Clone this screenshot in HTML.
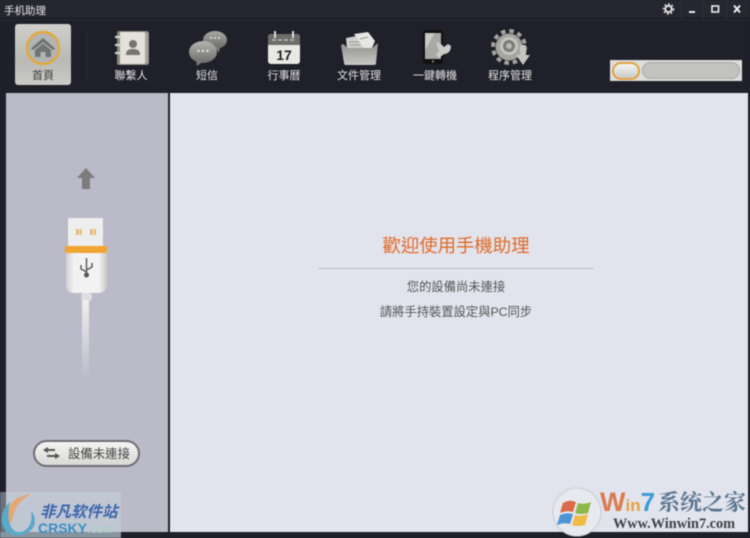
<!DOCTYPE html>
<html><head><meta charset="utf-8"><style>
html,body{margin:0;padding:0;background:#1f2029}
#r{position:relative;width:750px;height:538px;overflow:hidden;background:#1f2029;font-family:"Liberation Sans","Noto Sans CJK TC",sans-serif;filter:blur(.4px)}
#r div{position:absolute}
.t{color:#e4e4e4;font-size:11px;line-height:14px;text-align:center;white-space:nowrap;top:69px}
svg{position:absolute;overflow:visible}
</style></head><body><div id="r">
<div style="left:0;top:0;width:750px;height:18px;background:#25262f"></div>
<div style="left:0;top:18px;width:750px;height:1px;background:#14151a"></div>
<div style="left:0;top:19px;width:750px;height:1px;background:#2e2f39"></div>
<div style="left:4px;top:4px;color:#e8e8e8;font-size:10.5px;line-height:14px">手机助理</div>
<svg width="750" height="20" style="left:0;top:0" fill="none">
<circle cx="668.500" cy="9" r="3.200" stroke="#eee" stroke-width="1.800"/><circle cx="668.500" cy="9" r="5" stroke="#eee" stroke-width="1.400" stroke-dasharray="1.800 2"/>
<rect x="689" y="11" width="6" height="2" fill="#eee"/>
<rect x="712" y="6" width="6.500" height="6" stroke="#eee" stroke-width="1.600"/>
<path d="M734 5.500l6 7m0-7l-6 7" stroke="#eee" stroke-width="2"/>
<path d="M681.500 0v20M703.500 0v20M726.500 0v20" stroke="#2e2f38"/>
</svg>
<svg width="0" height="0"><defs>
<linearGradient id="g1" x1="0" y1="0" x2="0" y2="1"><stop offset="0" stop-color="#b4b4b0"/><stop offset="1" stop-color="#6e6e6a"/></linearGradient>
<linearGradient id="g2" x1="0" y1="0" x2="0" y2="1"><stop offset="0" stop-color="#a8a8a4"/><stop offset="1" stop-color="#696965"/></linearGradient>
<linearGradient id="g3" x1="0" y1="0" x2="0" y2="1"><stop offset="0" stop-color="#8f8f8b"/><stop offset="1" stop-color="#c8c8c4"/></linearGradient>
<linearGradient id="c" x1="0" y1="0" x2="0" y2="1"><stop offset="0" stop-color="#f0f0f0"/><stop offset="1" stop-color="#e8e8ea" stop-opacity="0"/></linearGradient>
<linearGradient id="b" x1="0" y1="0" x2="1" y2="0"><stop offset="0" stop-color="#d0d0d0"/><stop offset=".2" stop-color="#f2f2f2"/><stop offset=".8" stop-color="#f2f2f2"/><stop offset="1" stop-color="#c8c8c8"/></linearGradient>
</defs></svg>
<div style="left:15px;top:24px;width:56px;height:61px;border-radius:3px;background:linear-gradient(#cfcfcc,#b9b9b6 60%,#cbcbc8)"></div>
<svg width="40" height="40" style="left:23px;top:29px" viewBox="0 0 40 40">
<circle cx="20" cy="19" r="16" fill="#b4b4b2" stroke="#e3a93a" stroke-width="2.400"/>
<path d="M20 9L8 19.500l2 1.500 10-8 10 8 2-1.500z" fill="#6c7270"/><path d="M12 21l8-6.500 8 6.500v7h-5.500v-5h-5v5H12z" fill="#707674"/>
</svg>
<div class="t" style="left:15px;width:56px;color:#3a3a3a">首頁</div>
<div style="left:86px;top:32px;width:1px;height:48px;background:#2c2d36"></div>
<svg width="36" height="36" style="left:115px;top:30px" viewBox="0 0 36 36">
<rect x="2" y="1" width="32" height="34" rx="2" fill="#8a8880"/><rect x="5" y="2" width="25" height="32" fill="#e3e1da"/><rect x="30" y="3" width="3" height="30" fill="#aaa89f"/>
<path d="M0 7h7M0 15h7M0 23h7" stroke="#d5d5d2" stroke-width="2.200"/>
<circle cx="18" cy="14" r="4" fill="#76746e"/><path d="M11 25c0-5 3-6 7-6s7 1 7 6z" fill="#76746e"/>
</svg>
<div class="t" style="left:107px;width:48px">聯繫人</div>
<svg width="40" height="36" style="left:189px;top:30px" viewBox="0 0 40 36">
<ellipse cx="26" cy="10" rx="12" ry="9" fill="url(#g2)"/><path d="M26 17l4 6 1-7z" fill="#777"/>
<ellipse cx="14" cy="22" rx="14" ry="11" fill="url(#g1)"/><path d="M7 30l1 6 7-5z" fill="#777773"/>
<g fill="#e4e4e0"><circle cx="22" cy="8" r="1"/><circle cx="26" cy="8" r="1"/><circle cx="30" cy="8" r="1"/><circle cx="9.500" cy="21" r="1.200"/><circle cx="14" cy="21" r="1.200"/><circle cx="18.500" cy="21" r="1.200"/></g>
</svg>
<div class="t" style="left:183px;width:48px">短信</div>
<svg width="36" height="36" style="left:266px;top:30px" viewBox="0 0 36 36">
<rect x="2" y="4" width="32" height="30" rx="3" fill="#e8e8e5"/><path d="M2 15V7a3 3 0 0 1 3-3h26a3 3 0 0 1 3 3v8z" fill="#6c6c69"/>
<path d="M9 1v7M27 1v7" stroke="#ddd" stroke-width="2"/>
<path d="M6 10h24" stroke="#aaa" stroke-width="2" stroke-dasharray="4 2"/>
<text x="18" y="30" font-size="14" font-weight="bold" text-anchor="middle" fill="#222" font-family="Liberation Sans">17</text>
</svg>
<div class="t" style="left:260px;width:48px">行事曆</div>
<svg width="40" height="36" style="left:340px;top:30px" viewBox="0 0 40 36">
<path d="M6 8l16-3 6 4-2 20H8z" fill="#cfcfcc"/><path d="M14 4l14-2 7 9-6 14z" fill="#e6e6e3"/><path d="M9 12h10M10 15h10M20 9l8-2" stroke="#999"/>
<path d="M1 15l2-1 5 4h24l6-5-2 20q0 2-2 2H6q-2 0-2-2z" fill="url(#g3)"/>
</svg>
<div class="t" style="left:335px;width:48px">文件管理</div>
<svg width="32" height="36" style="left:422px;top:30px" viewBox="0 0 32 36">
<rect x="1" y="0" width="20" height="34" rx="3" fill="#111"/><rect x="3" y="3" width="16" height="26" fill="#a8a8a5"/><path d="M3 3h10L3 20z" fill="#c8c8c5"/>
<circle cx="11" cy="31.500" r="1.200" fill="#777"/>
<path d="M14 12l5 2 3 3 4-3 3 2c0 5-3 8-7 8l-5 4-3-3 3-4z" fill="#cbcbc7"/>
</svg>
<div class="t" style="left:411px;width:48px">一鍵轉機</div>
<svg width="38" height="36" style="left:492px;top:30px" viewBox="0 0 38 36">
<circle cx="17" cy="17" r="13.500" fill="#a4a4a0"/><circle cx="17" cy="17" r="16" fill="none" stroke="#a4a4a0" stroke-width="4" stroke-dasharray="4.500 3.900"/>
<circle cx="17" cy="16" r="9" fill="#c4c4c0"/><circle cx="17" cy="16" r="6" fill="#7a7a77"/><circle cx="17" cy="16" r="3" fill="#bbb"/>
<path d="M28 15h6v10h4l-7 10-7-10h4z" fill="#c4c4c0"/>
</svg>
<div class="t" style="left:486px;width:48px">程序管理</div>
<div style="left:610px;top:60px;width:132px;height:21px;background:#dddddd"></div>
<div style="left:642px;top:62px;width:98px;height:17px;border-radius:9px;background:#c2c2c0;border:1px solid #a8a8a6;box-sizing:border-box"></div>
<div style="left:612px;top:62px;width:28px;height:18px;border-radius:9px;box-sizing:border-box;border:2px solid #e0a33e;background:linear-gradient(#f5f5f3,#c9c9c6)"></div>

<div style="left:6px;top:93px;width:162px;height:439px;background:#babac8"></div>
<div style="left:170px;top:93px;width:578px;height:439px;background:#e1e4ec"></div>

<svg width="140" height="240" style="left:20px;top:150px" viewBox="0 0 140 240">
<path d="M66 18l9 10h-5v11h-8V28h-5z" fill="#7c7c7c"/>
<rect x="48" y="68" width="35" height="28" fill="#eeeeee"/>
<g fill="#e4b878"><rect x="56" y="79" width="3" height="6"/><rect x="60" y="79" width="2" height="6"/><rect x="70" y="79" width="3" height="6"/><rect x="74" y="79" width="2" height="6"/></g>
<path d="M46 102v33q0 8 8 8h24q8 0 9-8v-33z" fill="url(#b)"/>
<rect x="45" y="96" width="42" height="7" fill="#f0a431"/>
<path d="M66.500 108v18M61 115v4l5.500 3M72 113v4l-5.500 3" stroke="#555" stroke-width="1.400" fill="none"/><circle cx="66.500" cy="125" r="2.500" fill="#555"/>
<rect x="61" y="143" width="11" height="8" rx="3" fill="#dedede"/>
<rect x="62" y="150" width="7" height="82" fill="url(#c)"/>
</svg>

<div style="left:33px;top:440px;width:107px;height:27px;box-sizing:border-box;border-radius:14px;border:2px solid #6e6e72;background:linear-gradient(#f4f4f2,#d8d8d6)"></div>
<svg width="20" height="14" style="left:42px;top:446px" viewBox="0 0 20 14"><path d="M6 1L1 4l5 3V5h7V3H6zM13 7l5 3-5 3v-2H5V9h8z" fill="#555"/></svg>
<div style="left:68px;top:447px;color:#444;font-size:12.400px;line-height:15px;white-space:nowrap">設備未連接</div>

<div style="left:318px;top:234px;width:276px;text-align:center;color:#e26a28;font-size:18.400px;line-height:24px;white-space:nowrap">歡迎使用手機助理</div>
<div style="left:318px;top:268px;width:276px;height:1px;background:#b9bcc4"></div>
<div style="left:318px;top:279px;width:276px;text-align:center;color:#555;font-size:12.300px;line-height:16px">您的設備尚未連接</div>
<div style="left:318px;top:304px;width:276px;text-align:center;color:#555;font-size:12.300px;line-height:16px;white-space:nowrap">請將手持裝置設定與PC同步</div>

<div style="left:0;top:492px;width:121px;height:46px;background:rgba(200,215,225,.45)"></div>
<div style="left:0;top:532px;width:121px;height:6px;background:rgba(170,190,205,.45)"></div>
<svg width="40" height="46" style="left:0;top:492px" viewBox="0 0 40 46" fill="none">
<path d="M6 32C3 16 14 3 32 2 22 6 14 14 12 30" fill="#e8a468" opacity=".9"/>
<path d="M10 10C0 18-1 33 7 40c8 6 22 4 27-6 2-7 0-12-3-15 2 10-2 20-11 21C10 41 6 26 10 10z" fill="#5aa9c9"/>
</svg>
<div style="left:40px;top:503px;color:#3c66ad;font-size:15.500px;line-height:20px;font-weight:bold;font-style:italic;white-space:nowrap;font-family:'Liberation Sans','Noto Sans CJK SC',sans-serif">非凡软件站</div>
<div style="left:38px;top:521px;color:#3d8fc4;font-size:14px;line-height:15px;font-weight:bold;white-space:nowrap">CRSKY<span style="color:#a8cfc0;font-weight:normal;font-size:12px">.com</span></div>

<svg width="50" height="50" style="left:552px;top:487px" viewBox="0 0 50 50">
<circle cx="25" cy="25" r="24" fill="#e6e9ee" stroke="#c8ccd2"/>
<path d="M11 16q7-4 13-1l-3 10q-6-2-13 1z" fill="#d96a4a"/><path d="M26 16q6 2 13-1l-3 11q-7 2-13 0z" fill="#8db84a"/>
<path d="M8 28q7-3 13-1l-3 10q-6-2-13 1z" fill="#4d94d6"/><path d="M23 28q6 2 13-1l-3 11q-7 2-13 0z" fill="#f0bb45"/>
</svg>
<div style="left:600px;top:488px;font-size:27px;line-height:28px;font-weight:bold;font-family:'Liberation Sans',sans-serif;white-space:nowrap;color:#dc7b4e;transform-origin:left;transform:scaleX(1)">W<span style="color:#e8a23c;font-size:17px">in</span><span style="color:#3f9ad6;font-size:26px">7</span></div>
<div style="left:658px;top:490px;font-size:22px;line-height:25px;font-weight:bold;color:#5b7590;white-space:nowrap;font-family:'Liberation Serif','Noto Serif CJK SC',serif">系统之家</div>
<div style="left:613px;top:517px;font-size:14.300px;line-height:15px;font-weight:bold;font-family:'Liberation Serif',serif;color:#3d4248;white-space:nowrap">Www.Winwin7.com</div>
</div></body></html>
